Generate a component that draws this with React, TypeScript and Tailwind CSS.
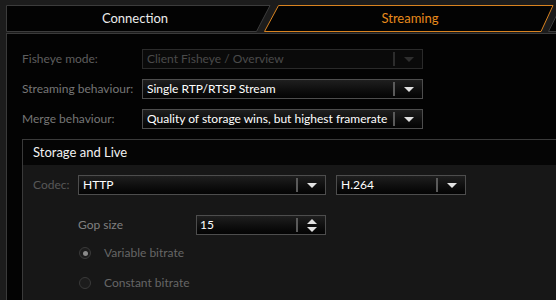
import React from 'react';

const font = 'font-[Lato,sans-serif]';

function Arrow({ color }: { color: string }) {
  return <div className={`h-0 w-0 border-x-[5px] border-t-[5px] border-x-transparent ${color}`}></div>;
}

interface SelectProps {
  value: string;
  className: string;
  disabled?: boolean;
}

function Select({ value, className, disabled }: SelectProps) {
  return (
    <div
      className={`flex h-[20px] items-center border ${className} ${
        disabled
          ? 'border-[#2a2a2a] bg-[#0a0a0a] text-[#4a4a4a]'
          : 'border-[#4d4d4d] bg-gradient-to-b from-[#1f1f1f] to-[#040404] text-white'
      }`}
    >
      <span className="flex-1 whitespace-nowrap pl-[4px] text-[12px] leading-[18px]">{value}</span>
      <div className={`h-[14px] w-[2px] ${disabled ? 'bg-[#2c2c2c]' : 'bg-[#5a5a5a]'}`}></div>
      <div className="flex w-[27px] justify-center">
        <Arrow color={disabled ? 'border-t-[#2e2e2e]' : 'border-t-[#e2e2e2]'} />
      </div>
    </div>
  );
}

function Row({ label, children, labelColor }: { label: string; children: React.ReactNode; labelColor: string }) {
  return (
    <div className="flex items-center">
      <span className={`w-[120px] text-[12px] ${labelColor}`}>{label}</span>
      {children}
    </div>
  );
}

function Radio({ label, checked }: { label: string; checked?: boolean }) {
  return (
    <div className="flex h-[30px] items-center">
      <div className="flex h-[12px] w-[12px] items-center justify-center rounded-full border border-[#3a3a3a] bg-[#1c1c1c]">
        {checked && <div className="h-[5px] w-[5px] rounded-full bg-[#8a8a8a]"></div>}
      </div>
      <span className="ml-[13px] text-[12px] text-[#666666]">{label}</span>
    </div>
  );
}

export default function App() {
  return (
    <div className={`flex h-[300px] w-[556px] flex-col overflow-hidden bg-[#1c1c1c] pl-[6px] pt-[5px] ${font}`}>
      {/* Tabs */}
      <div className="flex h-[28px] shrink-0">
        <div className="relative flex h-[28px] w-[265px] shrink-0 items-center justify-center">
          <svg className="absolute inset-0" width="265" height="28">
            <polygon points="0.5,0.5 264,0.5 250.5,26.5 0.5,26.5" fill="#030303" stroke="#3c3c3c" />
          </svg>
          <span className="relative -ml-[7px] text-[13px] text-[#ececec]">Connection</span>
        </div>
        <div className="relative -ml-[8px] flex h-[28px] w-[292px] shrink-0 items-center justify-center">
          <svg className="absolute inset-0" width="292" height="28">
            <polygon points="15.5,0.5 290,0.5 278,26.5 1.5,26.5" fill="#030303" stroke="#d98320" />
          </svg>
          <span className="relative ml-[2px] text-[13px] text-[#e88a1c]">Streaming</span>
        </div>
        <div className="relative -ml-[11px] h-[28px] w-[20px] shrink-0">
          <svg className="absolute inset-0" width="20" height="28">
            <polygon points="17.5,0.5 30,0.5 30,26.5 4.5,26.5" fill="#030303" stroke="#3c3c3c" />
          </svg>
        </div>
      </div>

      {/* Panel */}
      <div className="flex flex-1 flex-col border-l border-t border-[#3a3a3a] bg-[#030303] pl-[15px] pt-[15px]">
        <div className="flex flex-col gap-[10px]">
          <Row label="Fisheye mode:" labelColor="text-[#5e5e5e]">
            <Select value="Client Fisheye / Overview" className="w-[281px]" disabled />
          </Row>
          <Row label="Streaming behaviour:" labelColor="text-[#767676]">
            <Select value="Single RTP/RTSP Stream" className="w-[281px]" />
          </Row>
          <Row label="Merge behaviour:" labelColor="text-[#767676]">
            <Select value="Quality of storage wins, but highest framerate" className="w-[281px]" />
          </Row>
        </div>

        {/* Storage and Live group */}
        <div className="mt-[10px] flex flex-1 flex-col border-l border-t border-[#3a3a3a]">
          <div className="flex h-[25px] items-center bg-[#050505] pl-[10px] text-[13px] text-[#f2f2f2]">
            Storage and Live
          </div>
          <div className="flex flex-1 flex-col bg-[#171717] pl-[10px] pt-[10px]">
            <div className="flex items-center">
              <span className="w-[45px] text-[12px] text-[#585858]">Codec:</span>
              <Select value="HTTP" className="w-[248px]" />
              <Select value="H.264" className="ml-[10px] w-[130px]" />
            </div>
            <div className="mt-[20px] flex items-center pl-[45px]">
              <span className="w-[118px] text-[12px] text-[#808080]">Gop size</span>
              <div className="flex h-[20px] w-[130px] items-center border border-[#4d4d4d] bg-gradient-to-b from-[#1f1f1f] to-[#040404]">
                <span className="flex-1 pl-[3px] text-[12px] leading-[18px] text-white">15</span>
                <div className="h-[14px] w-[2px] bg-[#5a5a5a]"></div>
                <div className="flex w-[27px] flex-col items-center gap-[3px]">
                  <div className="h-0 w-0 border-x-[5px] border-b-[5px] border-x-transparent border-b-[#e2e2e2]"></div>
                  <div className="h-0 w-0 border-x-[5px] border-t-[5px] border-x-transparent border-t-[#e2e2e2]"></div>
                </div>
              </div>
            </div>
            <div className="mt-[3px] flex flex-col pl-[46px]">
              <Radio label="Variable bitrate" checked />
              <Radio label="Constant bitrate" />
            </div>
          </div>
        </div>
      </div>
    </div>
  );
}
